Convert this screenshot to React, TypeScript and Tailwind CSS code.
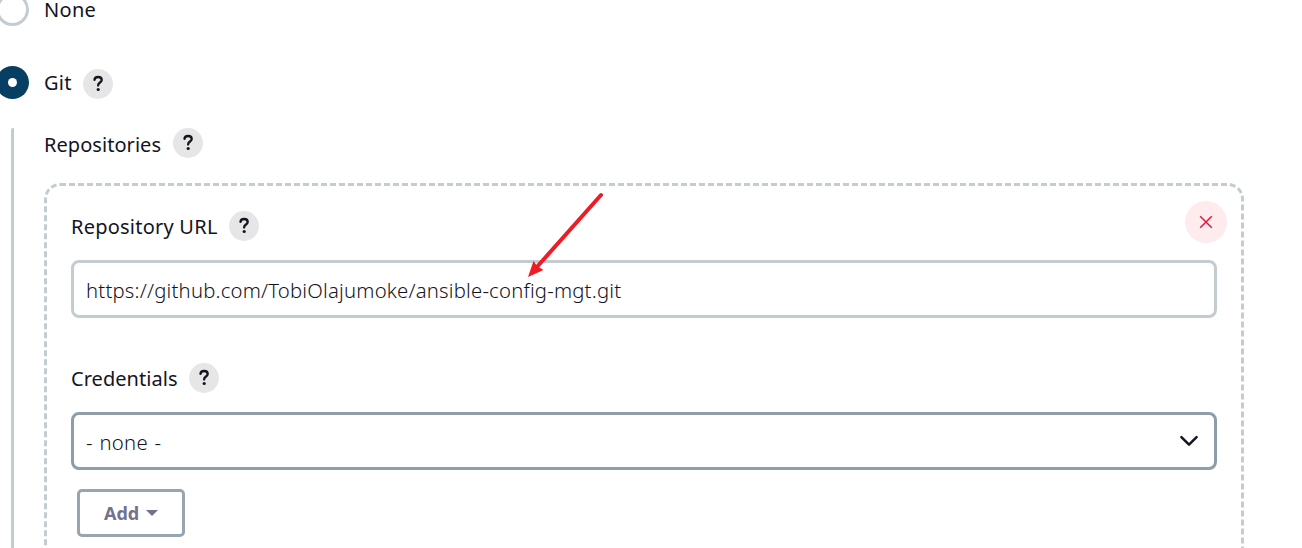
import React from "react";

function Help() {
  return (
    <button aria-label="Help" className="size-[30px] shrink-0 rounded-full bg-[#e6e6e6]">
      <svg viewBox="0 0 30 30" className="size-[30px]" fill="none">
        <path
          d="M11.5 10.9C11.6 9 13 8 15.1 8C17.3 8 18.7 9.1 18.7 10.9C18.7 13.6 15.1 13.5 15.1 16.5"
          stroke="#14141f"
          strokeWidth="2.3"
          strokeLinecap="round"
          strokeLinejoin="round"
        />
        <circle cx="15.2" cy="20.5" r="1.6" fill="#14141f" />
      </svg>
    </button>
  );
}

function Label({ children, className }: { children: React.ReactNode; className: string }) {
  return <span className={`whitespace-nowrap font-[450] ${className}`}>{children}</span>;
}

export default function App() {
  return (
    <main className="h-[548px] overflow-hidden bg-white font-['Noto_Sans','Open_Sans',sans-serif] text-[20px] leading-[30px] text-[#14141f]">
      <div className="-mt-[7px] -ml-1 flex h-[33px] items-center">
        <span className="size-[33px] shrink-0 rounded-full border-3 border-[#c3ccd1]" />
        <Label className="ml-[15px] leading-5 tracking-[0.3px]">None</Label>
      </div>

      <div className="mt-10 -ml-1 flex h-[33px] items-center">
        <span className="flex size-[33px] shrink-0 items-center justify-center rounded-full bg-[#063f63]">
          <span className="size-[9px] rounded-full bg-white" />
        </span>
        <Label className="ml-[15px] w-[39px] tracking-[0.3px]">Git</Label>
        <div className="mt-[3px] flex">
          <Help />
        </div>
      </div>

      <section className="mt-[29px] ml-[11px] h-[480px] rounded-tl-[2px] border-l-3 border-[#c3ccd1] pl-[30px]">
        <div className="flex h-[30px] items-start">
          <Label className="mt-[2px] w-[129px] tracking-[0.05px]">Repositories</Label>
          <Help />
        </div>

        <div className="mt-[25px] h-[460px] w-[1200px] rounded-2xl border-3 border-dashed border-[#c3ccd1] px-6">
          <div className="flex h-[74px] items-start pt-[25px]">
            <Label className="mt-px w-[158px] tracking-[0.23px]">Repository URL</Label>
            <Help />
            <button
              aria-label="Delete"
              className="-mt-[10px] -mr-[10px] ml-auto flex size-[42px] items-center justify-center rounded-full bg-[#fdebed]"
            >
              <svg viewBox="0 0 14 14" className="mb-px size-[14px]" stroke="#e6143c" strokeWidth="1.5">
                <path d="M1.2 1.2L12.8 12.8M12.8 1.2L1.2 12.8" />
              </svg>
            </button>
          </div>
          <div className="flex h-[58px] items-center rounded-lg border-3 border-[#c3ccd1] px-3">
            <span className="mt-px whitespace-nowrap font-[340] tracking-[0.205px] text-[20.3px]">
              https://github.com/TobiOlajumoke/ansible-config-mgt.git
            </span>
          </div>

          <div className="mt-[45px] flex h-[49px] items-start">
            <Label className="mt-px w-[118px] tracking-[0.05px]">Credentials</Label>
            <Help />
          </div>
          <div className="flex h-[58px] items-center justify-between rounded-lg border-3 border-[#8b9eaa] px-3">
            <span className="mt-px font-[340] tracking-[0.3px] text-[20.3px] [word-spacing:1px]">- none -</span>
            <svg viewBox="0 0 20 12" className="mr-[3px] h-3 w-5" fill="none">
              <path
                d="M2.4 2.2L10 9.6L17.6 2.2"
                stroke="#14141f"
                strokeWidth="2.5"
                strokeLinecap="round"
                strokeLinejoin="round"
              />
            </svg>
          </div>

          <button className="mt-[19px] ml-[6px] flex h-12 w-[108px] items-center rounded-[5px] border-3 border-[#98a5ae] pl-6 text-[18px] font-bold text-[#73718c]">
            <span className="w-[42px] text-left">Add</span>
            <svg viewBox="0 0 12 6" className="h-[6px] w-3" fill="#73718c">
              <path d="M0 0H12L6 6Z" />
            </svg>
          </button>
        </div>
      </section>

      <svg viewBox="0 0 80 90" className="absolute top-[190px] left-[525px] h-[90px] w-20">
        <path d="M76 5L11 78" stroke="#ee1c25" strokeWidth="4" strokeLinecap="round" />
        <path d="M3 87L8.5 71L12 76L18.5 80Z" fill="#ee1c25" />
      </svg>
    </main>
  );
}
